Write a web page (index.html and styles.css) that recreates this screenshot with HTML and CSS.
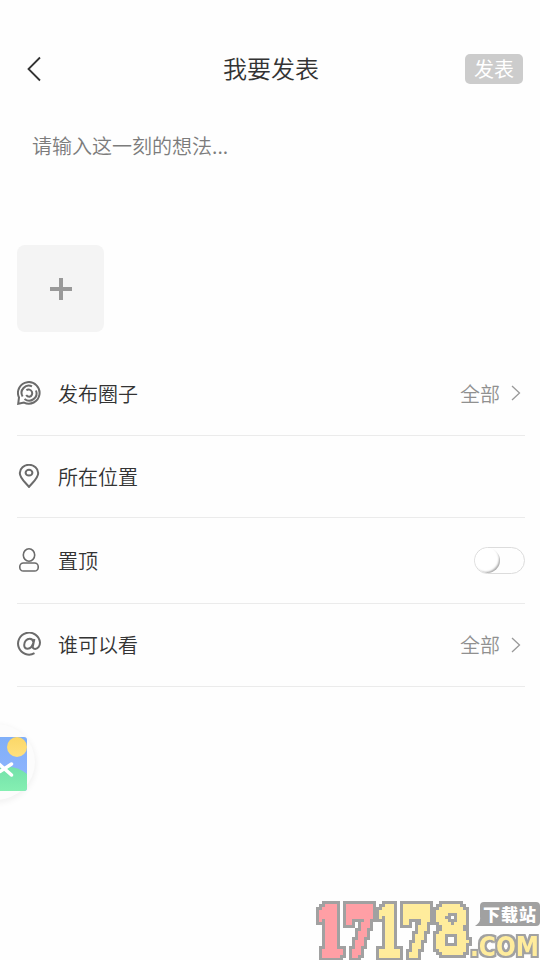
FILE: index.html
```html
<!DOCTYPE html>
<html lang="zh-CN">
<head>
<meta charset="utf-8">
<title>我要发表</title>
<link rel="stylesheet" href="styles.css">
</head>
<body>
<main class="page">
  <header class="header">
    <svg class="back" viewBox="0 0 16 26"><path d="M14 1.5 2.5 13 14 24.5"/></svg>
    <h1 class="title">我要发表</h1>
    <button class="publish">发表</button>
  </header>
  <div class="editor">请输入这一刻的想法...</div>
  <div class="add"><svg viewBox="0 0 22 22"><path d="M11 0v22M0 11h22"/></svg></div>
  <section class="options">
    <div class="row row-circle">
      <svg class="icon" viewBox="0 0 24 24"><path class="bold" d="M1.2 22.8 2 16.5A10.8 10.8 0 1 1 7 21.6Z"/><path class="bold" d="M5.6 15.5A7.2 7.2 0 0 1 15 5.4M19 9.5A7.4 7.4 0 0 1 7.5 18"/><path class="bold" d="M9.4 9.2A3.7 3.7 0 1 1 12.5 15.8C11 15.8 9.8 15 9.2 14"/></svg>
      <span class="label">发布圈子</span><span class="value">全部</span>
      <svg class="arrow" viewBox="0 0 10 16"><path d="M1 1 8.5 8 1 15"/></svg>
    </div>
    <div class="row row-place">
      <svg class="icon" viewBox="0 0 24 24"><path class="bold" d="M12 23C9 19 2.8 14.5 2.8 9a9.2 8.2 0 0 1 18.4 0C21.2 14.5 15 19 12 23Z"/><ellipse class="bold" cx="12" cy="8.7" rx="3.4" ry="2.9"/></svg>
      <span class="label">所在位置</span>
    </div>
    <div class="row row-top">
      <svg class="icon" viewBox="0 0 24 24"><ellipse cx="12" cy="7" rx="5.7" ry="6.2"/><rect x="2.8" y="15" width="18.4" height="8" rx="3.6"/></svg>
      <span class="label">置顶</span><span class="switch"><i class="knob"></i></span>
    </div>
    <div class="row row-view">
      <svg class="icon" viewBox="0 0 24 24"><path class="bold" d="M17.5 21.2A11 11 0 1 1 23 10.5c0 4-2.4 6.4-4.8 6.4-2.2 0-2.8-1.3-2.2-3.4L17.4 7M16.5 10.3C16 8 14.8 6.8 12.8 6.8 9.5 6.8 7.2 9.8 7.2 13c0 2.2 1.3 3.7 3.4 3.7 3 0 5-2.7 5.9-6.4"/></svg>
      <span class="label">谁可以看</span><span class="value">全部</span>
      <svg class="arrow" viewBox="0 0 10 16"><path d="M1 1 8.5 8 1 15"/></svg>
    </div>
  </section>
  <div class="floating">
    <svg viewBox="0 0 27 54">
      <defs>
        <linearGradient id="sky" x2="0" y2="1"><stop stop-color="#80aff8"/><stop offset="1" stop-color="#92b5ff"/></linearGradient>
        <linearGradient id="hill" x2="0" y2="1"><stop stop-color="#73e1aa"/><stop offset="1" stop-color="#85efb2"/></linearGradient>
        <linearGradient id="sun" x2="0" y2="1"><stop stop-color="#fbd767"/><stop offset="1" stop-color="#ffe17e"/></linearGradient>
      </defs>
      <path fill="url(#sky)" d="M0 0h24a3 3 0 0 1 3 3v51H0z"/>
      <path fill="url(#hill)" d="M0 31Q14 27 27 37v17H0Z"/>
      <circle cx="17" cy="10" r="10" fill="url(#sun)"/>
      <path class="blade" d="M0 34.5 11.5 27"/><path class="blade" d="M-1 27 11.5 38"/>
    </svg>
  </div>
  <svg class="watermark" viewBox="0 0 224 62" aria-label="17178.COM">
    <defs>
      <filter id="blocks" filterUnits="userSpaceOnUse" x="0" y="0" width="224" height="62" color-interpolation-filters="sRGB">
        <feFlood x="1" y="1" width="1" height="1" flood-color="#000"/>
        <feOffset x="0" y="0" width="3" height="3" dx="0" dy="0"/>
        <feTile result="grid"/>
        <feComponentTransfer in="SourceGraphic" result="crisp"><feFuncA type="discrete" tableValues="0 1"/></feComponentTransfer>
        <feComposite in="crisp" in2="grid" operator="in"/>
        <feMorphology operator="dilate" radius="1" result="cells"/>
        <feMorphology in="cells" operator="dilate" radius="3" result="wide"/>
        <feFlood flood-color="#a1a1a1"/>
        <feComposite in2="wide" operator="in" result="outline"/>
        <feMerge><feMergeNode in="outline"/><feMergeNode in="cells"/></feMerge>
      </filter>
      <filter id="edge" filterUnits="userSpaceOnUse" x="0" y="0" width="224" height="62" color-interpolation-filters="sRGB">
        <feMorphology operator="dilate" radius="2" result="wide"/>
        <feFlood flood-color="#a1a1a1"/>
        <feComposite in2="wide" operator="in" result="outline"/>
        <feMerge><feMergeNode in="outline"/><feMergeNode in="SourceGraphic"/></feMerge>
      </filter>
    </defs>
    <g class="digits" filter="url(#blocks)">
      <text class="pink" x="1" y="56" textLength="27" lengthAdjust="spacingAndGlyphs">1</text>
      <text class="pink" x="28" y="56" textLength="31" lengthAdjust="spacingAndGlyphs">7</text>
      <text x="59" y="56" textLength="28" lengthAdjust="spacingAndGlyphs">1</text>
      <text x="86" y="56" textLength="31" lengthAdjust="spacingAndGlyphs">7</text>
      <text class="eight" x="116" y="57" textLength="39" lengthAdjust="spacingAndGlyphs">8</text>
    </g>
    <text class="domain" filter="url(#edge)" x="154" y="58" textLength="69" lengthAdjust="spacingAndGlyphs">.COM</text>
    <path fill="#a1a1a1" d="M168 4h52q4 0 4 4v16q0 4-4 4h-61q6-4 5-9V8q0-4 4-4Z"/>
    <text class="site" x="167" y="22.5" textLength="53">下载站</text>
  </svg>
</main>
</body>
</html>
```
FILE: styles.css
```css
* { box-sizing: border-box; }
body { margin: 0; background: #fefefe; font-family: "Noto Sans CJK SC", sans-serif; font-weight: 350; color: #333; }
.page { position: relative; width: 540px; height: 960px; overflow: hidden; padding: 43px 15px 0 17px; }
svg { display: block; fill: none; }
.header { display: grid; grid-template-columns: 70px 1fr 70px; align-items: center; height: 52px; padding-right: 2px; }
.back { width: 16px; height: 26px; margin-left: 9px; stroke: #333; stroke-width: 1.8; }
.title { margin: 0; padding: 0 0 2px 2px; font-size: 24px; font-weight: 350; line-height: 36px; text-align: center; }
.publish { justify-self: end; width: 58px; height: 30px; padding: 0; border: 0; border-radius: 5px; background: #ccc; color: #fff; font: 400 20px/30px "Noto Sans CJK SC", sans-serif; }
.editor { height: 150px; padding: 36px 15px 0; font-size: 20px; line-height: 30px; color: #7c7c7c; }
.add { display: flex; align-items: center; justify-content: center; width: 87px; height: 87px; border-radius: 8px; background: #f4f4f4; }
.add svg { width: 22px; height: 22px; stroke: #999; stroke-width: 4; }
.options { padding-top: 20px; }
.row { display: flex; align-items: center; height: 84px; border-bottom: 1px solid #ebebeb; font-size: 20px; line-height: 30px; }
.row-place { height: 82px; }
.row-top { height: 86px; }
.row-view { height: 83px; }
.icon { width: 24px; height: 24px; margin: 0 17px 2px 0; stroke: #6b6b6b; stroke-width: 1.6; }
.bold { stroke-width: 2; }
.label { flex: 1; }
.value { color: #909090; }
.arrow { width: 10px; height: 16px; margin: 0 4px 1px 11px; stroke: #999; stroke-width: 1.3; }
.switch { width: 51px; height: 27px; border: 1px solid #dcdcdc; border-radius: 14px; overflow: hidden; }
.knob { display: block; width: 25px; height: 25px; border-radius: 50%; background: #fff; box-shadow: inset -2px -2px 2px -1px #aaa; }
.floating { position: absolute; left: -43px; top: 724px; width: 78px; height: 76px; padding: 13px 0 0 43px; border-radius: 50%; background: #fcfcfc; box-shadow: 0 2px 7px #eee; }
.floating svg { width: 27px; height: 54px; border-radius: 0 0 3px 0; }
.blade { stroke: #fff; stroke-width: 3.5; stroke-linecap: round; }
.watermark { position: absolute; left: 316px; top: 898px; width: 224px; height: 62px; }
.digits { font: bold 66px "DejaVu Serif", serif; fill: #ffec9c; stroke: #ffec9c; stroke-width: 5; }
.pink { fill: #ff9fa5; stroke: #ff9fa5; }
.eight { font: bold 70px "DejaVu Sans", sans-serif; stroke-width: 0; }
.domain { font: bold 27px "DejaVu Sans", sans-serif; fill: #ffec9c; }
.site { font: 900 17px "Noto Sans CJK SC", sans-serif; fill: #fff; }
```
